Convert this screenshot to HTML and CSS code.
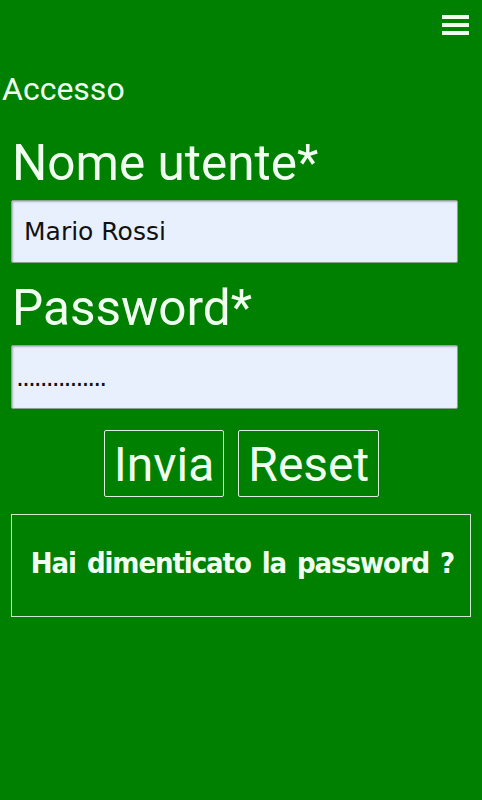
FILE: index.html
```html
<!DOCTYPE html>
<html lang="it">
<head>
<meta charset="utf-8">
<title>Accesso</title>
<link rel="stylesheet" href="styles.css">
</head>
<body>
<header class="topbar">
  <button class="menu-btn" type="button" aria-label="Menu">
    <svg width="27" height="21" viewBox="0 0 27 21" aria-hidden="true">
      <rect x="0" y="0" width="27" height="4" fill="#f0fff0"/>
      <rect x="0" y="8" width="27" height="4" fill="#f0fff0"/>
      <rect x="0" y="16" width="27" height="4" fill="#f0fff0"/>
    </svg>
  </button>
</header>
<h1 class="page-title">Accesso</h1>
<form class="login-form">
  <label class="field-label" for="user">Nome utente*</label>
  <input class="field-input" id="user" type="text" value="Mario Rossi">
  <label class="field-label field-label--second" for="pass">Password*</label>
  <input class="field-input field-input--pass" id="pass" type="text" value="...............">
  <div class="actions">
    <button class="action-btn" type="submit">Invia</button>
    <button class="action-btn" type="reset">Reset</button>
  </div>
  <a class="forgot" href="#"><span class="forgot-text">Hai dimenticato la password ?</span></a>
</form>
</body>
</html>
```
FILE: styles.css
```css
html, body {
  margin: 0;
  padding: 0;
}
body {
  background: #008000;
  color: #f0fff0;
  font-family: Roboto, "Liberation Sans", sans-serif;
  width: 482px;
  height: 800px;
  overflow: hidden;
}
.topbar {
  display: flex;
  justify-content: flex-end;
  height: 70px;
  padding: 15px 13px 0 0;
  box-sizing: border-box;
}
.menu-btn {
  background: none;
  border: 0;
  padding: 0;
  width: 27px;
  height: 21px;
  display: block;
}
.menu-btn svg {
  display: block;
}
.page-title {
  margin: 0 0 0 2px;
  font-weight: 400;
  font-size: 32px;
  line-height: 38px;
}
.login-form {
  display: flex;
  flex-direction: column;
  align-items: flex-start;
  padding: 27px 11px 0 11px;
}
.field-label {
  font-size: 49.5px;
  line-height: 56px;
  margin-left: 1px;
  margin-bottom: 9px;
}
.field-label--second {
  margin-top: 17px;
}
.field-input {
  box-sizing: border-box;
  width: 447px;
  height: 63px;
  margin: 0;
  background: #e8f0fe;
  border: 1px solid #8da38d;
  border-radius: 2px;
  box-shadow: inset 1px 1px 2px rgba(0, 0, 0, 0.25);
  font-family: "DejaVu Sans", Verdana, sans-serif;
  font-size: 25px;
  color: #111;
  padding: 0 0 0 12px;
  outline: none;
}
.field-input--pass {
  height: 64px;
  padding-left: 4px;
  letter-spacing: -2px;
}
.actions {
  align-self: stretch;
  display: flex;
  justify-content: center;
  gap: 14px;
  margin-top: 21px;
  padding-left: 1px;
}
.action-btn {
  background: transparent;
  color: #f0fff0;
  border: 1px solid #e0f0e0;
  border-radius: 2px;
  font-family: Roboto, "Liberation Sans", sans-serif;
  font-size: 48px;
  line-height: 56px;
  padding: 6px 9px 3px;
  margin: 0;
}
.forgot {
  box-sizing: border-box;
  width: 460px;
  height: 103px;
  margin-top: 17px;
  border: 1px solid #d0e8d0;
  display: flex;
  align-items: center;
  justify-content: center;
  padding: 0 0 6px 3px;
  color: #f0fff0;
  text-decoration: none;
}
.forgot-text {
  white-space: nowrap;
  font-family: "DejaVu Sans", sans-serif;
  font-stretch: condensed;
  font-weight: 700;
  font-size: 29px;
  letter-spacing: -1.1px;
  word-spacing: 3px;
}
```
